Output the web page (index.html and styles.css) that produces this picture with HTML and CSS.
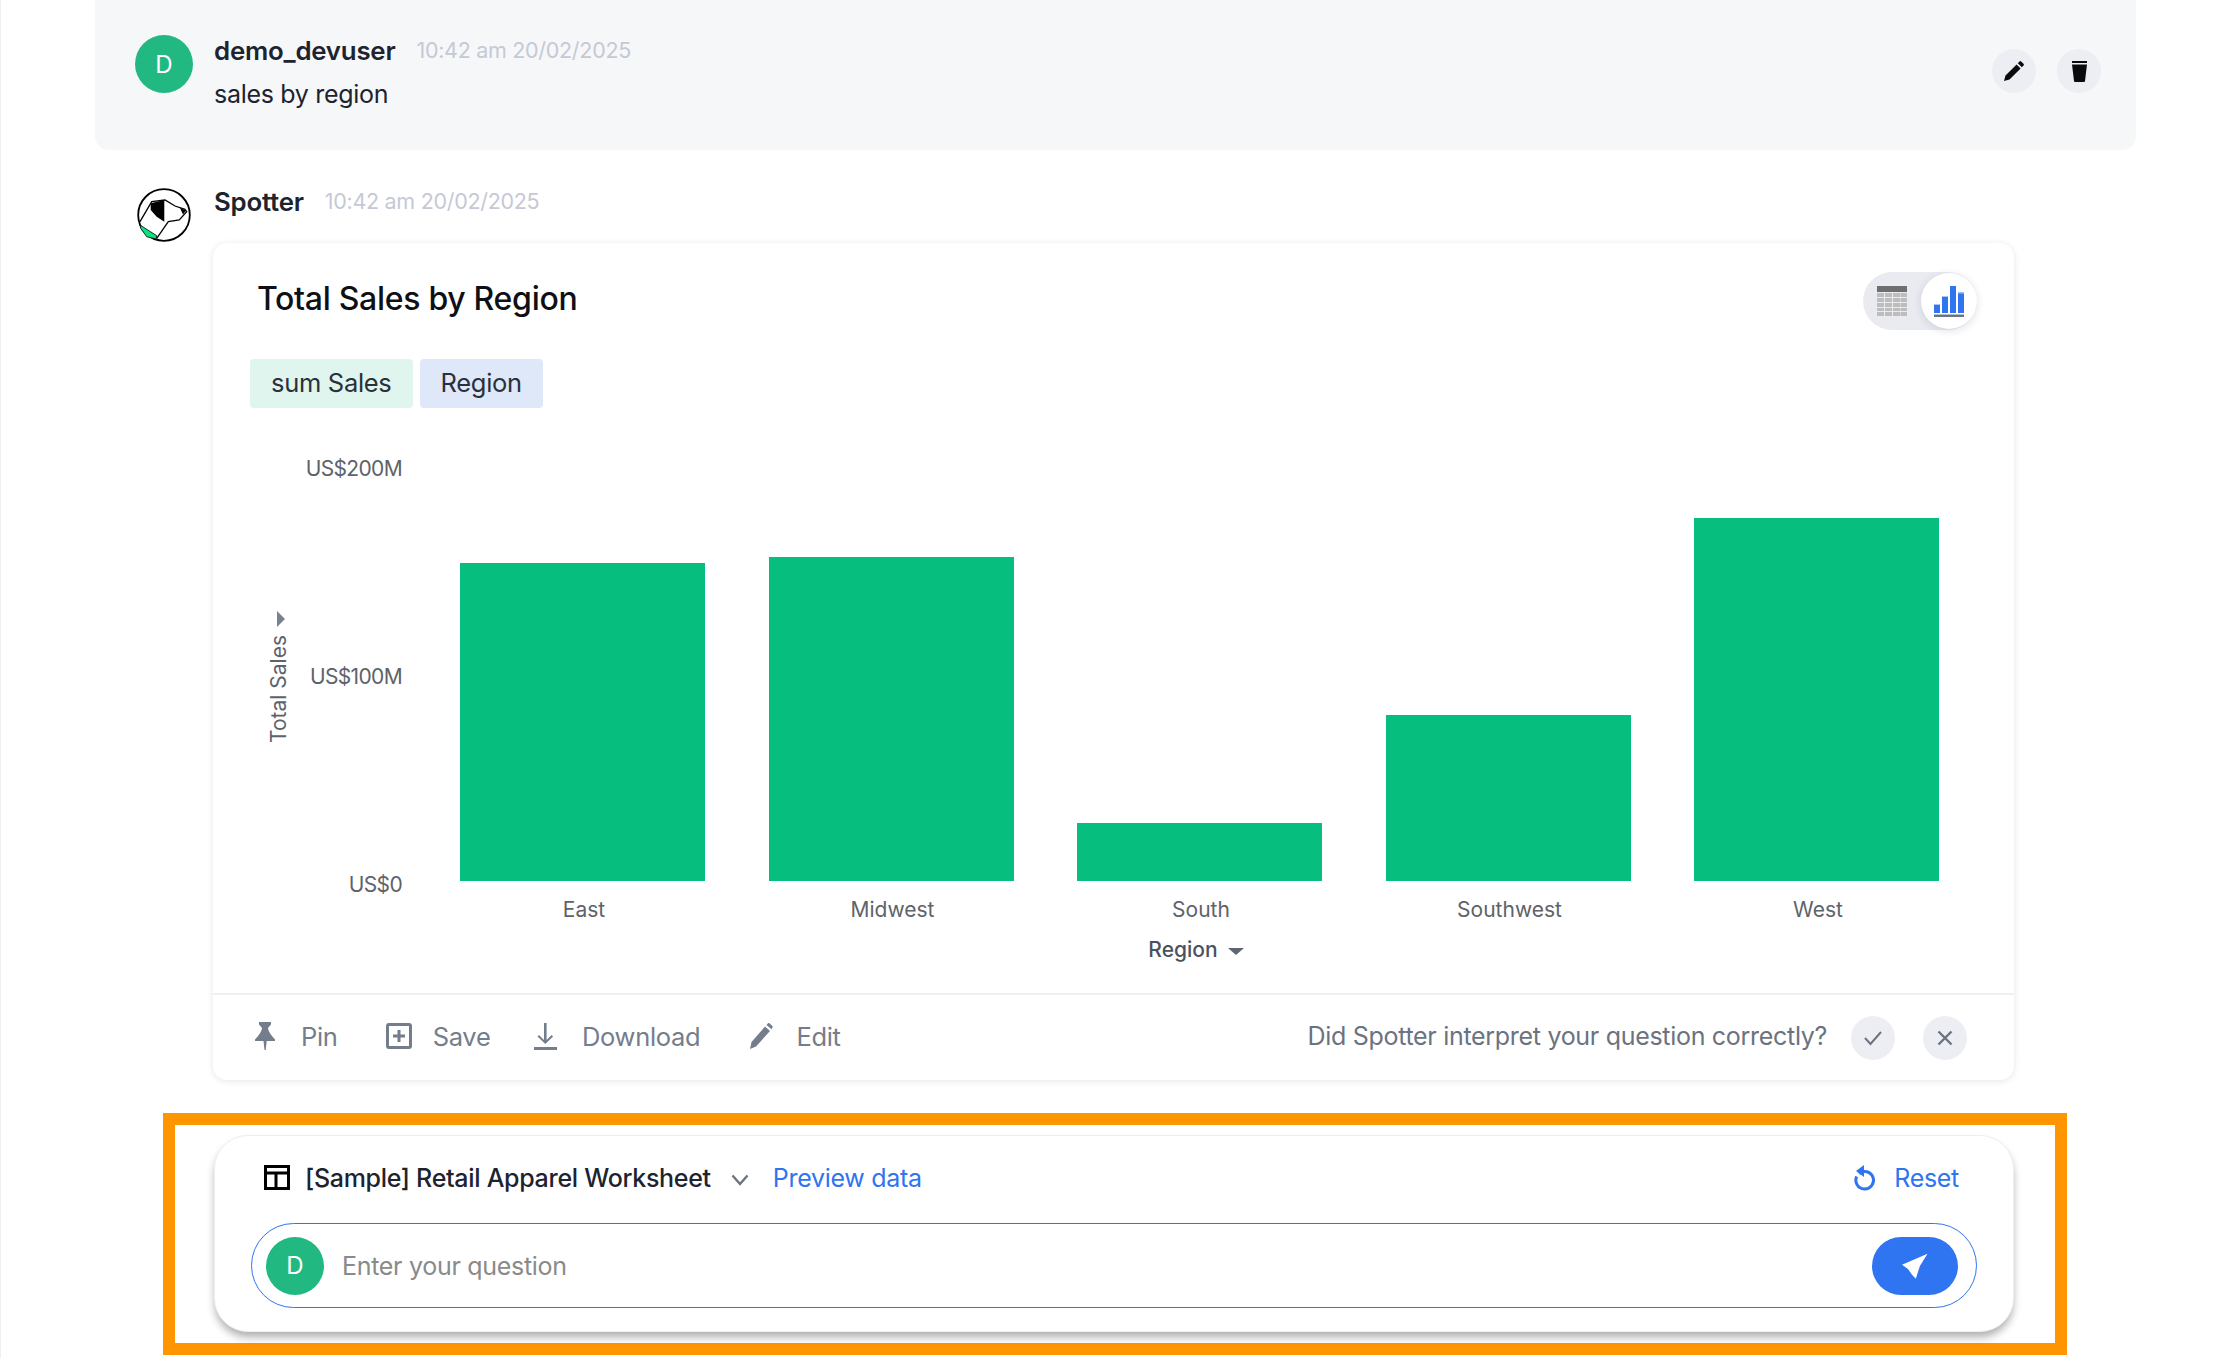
FILE: index.html
```html
<!DOCTYPE html>
<html lang="en">
<head>
<meta charset="utf-8">
<title>Spotter</title>
<link rel="stylesheet" href="styles.css">
</head>
<body>
<main class="page">
  <section class="user-msg">
    <div class="avatar">D</div>
    <div class="msg-body">
      <div class="msg-meta"><span class="author">demo_devuser</span><span class="stamp">10:42 am 20/02/2025</span></div>
      <p class="msg-text">sales by region</p>
    </div>
    <div class="msg-tools">
      <button class="round-btn"><svg width="20" height="20" viewBox="0 0 20 20"><path d="M0 20l1.500-5.500L12.600 3.400l4 4L5.500 18.500z M13.800 2.200L15.500.5a1.200 1.200 0 0 1 1.700 0l2.300 2.300a1.200 1.200 0 0 1 0 1.700l-1.700 1.700z" fill="#0b0b0b"/></svg></button>
      <button class="round-btn"><svg width="15" height="21" viewBox="0 0 15 21"><path d="M0 0h15v2H0zM0 3.500h15L13 20a1 1 0 0 1-1 1H3a1 1 0 0 1-1-1z" fill="#0b0b0b"/></svg></button>
    </div>
  </section>

  <section class="spotter">
    <svg class="dog" width="54" height="54" viewBox="0 0 54 54">
      <circle cx="27" cy="27" r="25.800" fill="#fff" stroke="#000" stroke-width="1.800"/>
      <path d="M3 37l16.700 10.700-.7 3.300-9.300-2.300-6-8.400z" fill="#0be581" stroke="#000" stroke-width=".8"/>
      <path d="M3 33.700L14.700 13.700 28 12l10 6 10 3.300 1.700 2.400-7.400 8.300-11 1.700-11.600 16.600" fill="none" stroke="#000" stroke-width="1.300"/>
      <path d="M13.700 15.300L27.300 12v21.700l-7.600-5-6-6.700z M43 20l6 2.500-3 4z" fill="#000"/>
    </svg>
    <div class="spotter-col">
      <div class="msg-meta spotter-meta"><span class="author">Spotter</span><span class="stamp">10:42 am 20/02/2025</span></div>
      <article class="card">
        <header class="card-head">
          <h1 class="card-title">Total Sales by Region</h1>
          <div class="toggle">
            <svg class="table-ico" width="30" height="30" viewBox="0 0 30 30">
              <rect width="30" height="6" fill="#6e6e6e"/>
              <path d="M0 7h7v4H0zM8 7h7v4H8zM16 7h7v4h-7zM23.500 7H30v4h-6.500zM0 12h7v4H0zM8 12h7v4H8zM16 12h7v4h-7zM23.500 12H30v4h-6.500zM0 17h7v4H0zM8 17h7v4H8zM16 17h7v4h-7zM23.500 17H30v4h-6.500zM0 22h7v3H0zM8 22h7v3H8zM16 22h7v3h-7zM23.500 22H30v3h-6.500zM0 26h7v4H0zM8 26h7v4H8zM16 26h7v4h-7zM23.500 26H30v4h-6.500z" fill="#bdbdbd"/>
            </svg>
            <span class="toggle-knob">
              <svg width="30" height="31" viewBox="0 0 30 31">
                <path d="M0 18h6v9H0zM8 10h6v17H8zM16 0h6v27h-6zM24 6.500h6V27h-6z" fill="#2f74f0"/>
                <path d="M0 18h6v1H0zM8 10h6v1H8zM24 6.500h6v1h-6z" fill="#a9c4f5"/>
                <rect y="28.500" width="30" height="2.500" fill="#6c7480"/>
              </svg>
            </span>
          </div>
        </header>
        <div class="chips">
          <span class="chip chip-green">sum Sales</span>
          <span class="chip chip-blue">Region</span>
        </div>
        <div class="chart">
          <div class="y-title"><span class="y-title-text">Total Sales</span><i class="y-caret"></i></div>
          <div class="y-labels"><span>US$200M</span><span>US$100M</span><span>US$0</span></div>
          <div class="plot">
            <div class="bars">
              <div class="bar" style="height:318px"></div>
              <div class="bar" style="height:324px"></div>
              <div class="bar" style="height:58px"></div>
              <div class="bar" style="height:166px"></div>
              <div class="bar" style="height:363px"></div>
            </div>
            <div class="x-labels"><span>East</span><span>Midwest</span><span>South</span><span>Southwest</span><span>West</span></div>
            <div class="x-title">Region<i class="x-caret"></i></div>
          </div>
        </div>
        <footer class="actions">
          <span class="action"><svg width="26" height="28" viewBox="0 0 26 28"><path d="M5 0h12v2.500l-3 3.500q0 4 7 11.500V19H1v-1.500Q8 10 8 6L5 2.500zM9.500 19h3.200l-1 9h-1.200z" fill="#747d8c"/></svg>Pin</span>
          <span class="action"><svg width="26" height="26" viewBox="0 0 26 26"><rect x="1.500" y="1.500" width="23" height="23" rx="1.500" fill="none" stroke="#747d8c" stroke-width="3"/><path d="M11.500 7h3v4.500H19v3h-4.500V19h-3v-4.500H7v-3h4.500z" fill="#747d8c"/></svg>Save</span>
          <span class="action action-dl"><svg width="23" height="27" viewBox="0 0 23 27"><path d="M10 0h2.600v17l5-5 1.500 1.500-7.800 7.500-7.800-7.500L5 12l5 5zM0 24h23v3H0z" fill="#747d8c"/></svg>Download</span>
          <span class="action"><svg width="26" height="26" viewBox="0 0 26 26"><path d="M1 26l1.500-7L16 3.500l5 4.500L7 23.500z M17.500 2l1.500-1.700a1 1 0 0 1 1.400 0l3 2.700a1 1 0 0 1 0 1.400L22.500 6.300z" fill="#747d8c"/></svg>Edit</span>
          <span class="feedback">Did Spotter interpret your question correctly?</span>
          <button class="round-btn"><svg width="20" height="16" viewBox="0 0 20 16"><path d="M2 8l5.500 6L18 2" fill="none" stroke="#6b7280" stroke-width="2"/></svg></button>
          <button class="round-btn round-btn-x"><svg width="16" height="16" viewBox="0 0 16 16"><path d="M1.500 1.500l13 13M14.500 1.500l-13 13" fill="none" stroke="#6b7280" stroke-width="2.400"/></svg></button>
        </footer>
      </article>
    </div>
  </section>

  <section class="highlight">
    <div class="composer">
      <div class="source-row">
        <svg class="source-ico" width="26" height="25" viewBox="0 0 26 25"><path d="M1.500 1.500h23v22h-23zM1.500 8h23M12 8v15.500" fill="none" stroke="#000" stroke-width="3"/></svg>
        <span class="source-name">[Sample] Retail Apparel Worksheet</span>
        <svg class="source-chev" width="18" height="12" viewBox="0 0 18 12"><path d="M1.500 1.500L9 10l7.500-8.500" fill="none" stroke="#6b7280" stroke-width="2.400"/></svg>
        <a class="link preview">Preview data</a>
        <svg class="reset-ico" width="22" height="26" viewBox="0 0 22 26"><path d="M6 8.500a8.800 8.800 0 1 1-2.300 3" fill="none" stroke="#2f74f0" stroke-width="3"/><path d="M11 0v12L3 6z" fill="#2f74f0"/></svg>
        <a class="link">Reset</a>
      </div>
      <div class="ask">
        <div class="avatar">D</div>
        <span class="placeholder">Enter your question</span>
        <button class="send"><svg width="26" height="26" viewBox="0 0 26 26"><path d="M25.500.7L0 11.700 6 16l4 5.700 3.800 4L17.900 13z" fill="#fff"/></svg></button>
      </div>
    </div>
  </section>
</main>
</body>
</html>
```
FILE: styles.css
```css
* { box-sizing: border-box; }
html, body { margin: 0; padding: 0; background: #fff; }
body {
  width: 2224px;
  height: 1358px;
  overflow: hidden;
  font-family: Inter, "Liberation Sans", sans-serif;
  color: #1d232f;
}
.page {
  height: 1358px;
  padding-left: 94px;
  border-left: 1px solid #eeeff2;
}
button { border: 0; padding: 0; font: inherit; }

.user-msg {
  width: 2041px;
  height: 150px;
  background: #f6f7f9;
  border-radius: 0 0 14px 14px;
  display: flex;
  padding: 35px 35px 0 40px;
}
.avatar {
  flex: none;
  width: 58px;
  height: 58px;
  border-radius: 50%;
  background: #21b981;
  color: #fff;
  font-size: 24px;
  display: flex;
  align-items: center;
  justify-content: center;
}
.msg-body { margin: -2px 0 0 21px; flex: 1; }
.msg-meta {
  display: flex;
  align-items: center;
  gap: 21px;
  height: 34px;
}
.author { font-size: 25.800px; font-weight: 600; letter-spacing: -.2px; }
.stamp { font-size: 21.500px; color: #c5c9d5; letter-spacing: -.3px; }
.msg-text { margin: 11px 0 0; font-size: 25px; letter-spacing: -.3px; line-height: 32px; }
.msg-tools { display: flex; gap: 21px; margin-top: 14px; }
.round-btn {
  flex: none;
  width: 44px;
  height: 44px;
  border-radius: 50%;
  background: #eceef3;
  display: flex;
  align-items: center;
  justify-content: center;
}

.spotter {
  display: flex;
  margin-top: 38px;
  padding-left: 42px;
}
.dog { flex: none; }
.spotter-col { margin-left: 22px; }
.spotter-meta { margin-top: -4px; padding-left: 1px; }
.card {
  margin-top: 25px;
  width: 1801px;
  height: 837px;
  background: #fff;
  border-radius: 14px;
  box-shadow: 0 1px 6px rgba(30, 40, 70, .12);
  display: flex;
  flex-direction: column;
}
.card-head {
  display: flex;
  justify-content: space-between;
  padding: 29px 37px 0 44px;
}
.card-title { margin: 7px 0 0; font-size: 32px; line-height: 40px; font-weight: 500; color: #0e1016; letter-spacing: -.3px; }
.toggle {
  position: relative;
  flex: none;
  width: 114px;
  height: 58px;
  border-radius: 29px;
  background: #eaebf1;
  padding: 14px;
}
.table-ico { display: block; }
.toggle-knob {
  position: absolute;
  right: 0;
  top: 1px;
  width: 56px;
  height: 56px;
  border-radius: 50%;
  background: #fff;
  box-shadow: 0 2px 8px rgba(30, 40, 70, .14);
  display: flex;
  align-items: center;
  justify-content: center;
}

.chips { display: flex; gap: 7px; margin-top: 29px; padding-left: 37px; }
.chip {
  height: 49px;
  border-radius: 4px;
  display: flex;
  align-items: center;
  padding: 0 21px 2px;
  font-size: 25.500px;
  letter-spacing: -.3px;
  color: #2a303c;
}
.chip-green { background: #e0f5ee; }
.chip-blue { background: #dfe8f8; }

.chart { display: flex; flex: none; height: 585px; padding: 47px 0 0 56px; }
.y-title {
  width: 22px;
  height: 442px;
  position: relative;
}
.y-title-text {
  position: absolute;
  left: 10px;
  top: 234px;
  transform: translate(-50%, -50%) rotate(-90deg);
  white-space: nowrap;
  font-size: 21px;
  line-height: 24px;
  color: #5e6269;
}
.y-caret {
  position: absolute;
  left: 8px;
  top: 156px;
  border-left: 8px solid #78818f;
  border-top: 8px solid transparent;
  border-bottom: 8px solid transparent;
}
.y-labels {
  width: 111px;
  height: 442px;
  margin-top: 1px;
  display: flex;
  flex-direction: column;
  justify-content: space-between;
  align-items: flex-end;
  font-size: 21px;
  line-height: 26px;
  color: #5e6269;
  letter-spacing: -.65px;
}
.plot { margin-left: 58px; width: 1479px; }
.bars { display: flex; gap: 63.500px; align-items: flex-end; height: 426px; }
.bar { width: 245px; background: #06bf7f; }
.x-labels { display: flex; gap: 63.500px; margin-top: 16px; padding-left: 1.500px; }
.x-labels span { flex: none; width: 245px; text-align: center; font-size: 21px; line-height: 26px; color: #5e6269; }
.x-title {
  margin-top: 14px;
  text-align: center;
  font-size: 21px;
  line-height: 26px;
  color: #4b5160;
  font-weight: 500;
  padding-right: 7px;
}
.x-caret {
  display: inline-block;
  margin-left: 10px;
  vertical-align: 2px;
  border-top: 7px solid #5e6675;
  border-left: 8px solid transparent;
  border-right: 8px solid transparent;
}

.actions {
  flex: 1;
  border-top: 2px solid #eeeff2;
  display: flex;
  align-items: center;
  padding: 0 47px 3px 41px;
  gap: 48px;
  color: #747d8c;
  font-size: 25.500px;
  letter-spacing: -.3px;
}
.action { display: flex; align-items: center; gap: 21px; }
.action-dl { margin: 0 1px 0 -4.500px; gap: 25px; }
.feedback { margin-left: auto; margin-right: -24px; color: #6b7280; white-space: nowrap; font-size: 25px; }
.actions .round-btn { margin-top: 3px; }
.actions .round-btn-x { margin-left: -20px; }

.highlight {
  margin: 33px 0 0 68px;
  width: 1904px;
  height: 242px;
  border: 12px solid #ff9500;
  padding: 10px 0 0 39px;
}
.composer {
  width: 1800px;
  height: 197px;
  background: #fff;
  border-radius: 34px;
  border: 1px solid #eeeff2;
  box-shadow: 0 6px 8px -1px rgba(0, 0, 0, .32);
  padding: 0 36px;
}
.source-row {
  display: flex;
  align-items: center;
  height: 83px;
  margin-bottom: 4px;
  padding: 0 18px 0 13px;
  font-size: 25px;
  letter-spacing: -.3px;
}
.source-name { margin-left: 15px; font-weight: 500; white-space: nowrap; }
.source-chev { margin-left: 20px; margin-top: 4px; }
.link { color: #2f74f0; white-space: nowrap; }
.preview { margin-left: 24px; margin-right: auto; }
.reset-ico { margin-right: 19px; }
.ask {
  height: 85px;
  border: 1px solid #2f74f0;
  border-radius: 43px;
  display: flex;
  align-items: center;
  padding: 0 18px 0 14px;
}
.placeholder { margin-left: 18px; font-size: 25px; letter-spacing: -.3px; color: #8a8a8a; flex: 1; }
.send {
  width: 86px;
  height: 58px;
  border-radius: 29px;
  background: #2f74f0;
  display: flex;
  align-items: center;
  justify-content: center;
}
```
